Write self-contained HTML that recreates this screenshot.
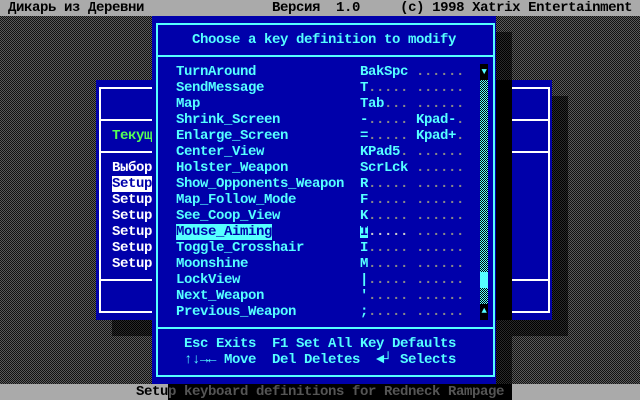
<!DOCTYPE html>
<html><head><meta charset="utf-8"><style>
*{margin:0;padding:0}
body{width:640px;height:400px;overflow:hidden;position:relative;font-family:"Liberation Mono",monospace;font-size:14px;letter-spacing:-0.4px;line-height:16px;font-weight:bold;background:repeating-conic-gradient(#5a5a5a 0 25%,#111 0 50%) 0 0/2px 2px}
div{position:absolute}
.t{white-space:pre;height:16px}
.c{color:#55ffff}.w{color:#fff}.d{color:#888}
.dk{background:repeating-conic-gradient(#2a2a2a 0 25%,#000 0 50%) 0 0/2px 2px}
</style></head><body>
<div class="t" style="left:0;top:0;width:640px;background:#aaa;color:#000"> Дикарь из Деревни                Версия  1.0     (c) 1998 Xatrix Entertainment</div>

<div class="dk" style="left:552px;top:96px;width:16px;height:240px"></div>
<div class="dk" style="left:112px;top:320px;width:456px;height:16px"></div>
<div style="left:96px;top:80px;width:456px;height:240px;background:#0000aa"></div>
<div style="left:99px;top:87px;border:2px solid #fff;box-sizing:border-box;width:451px;height:226px"></div>
<div style="left:99px;top:119px;width:451px;height:2px;background:#fff"></div>
<div style="left:99px;top:151px;width:451px;height:2px;background:#fff"></div>
<div style="left:99px;top:279px;width:451px;height:2px;background:#fff"></div>
<div class="t" style="left:112px;top:128px;color:#55ff55">Текущ</div>
<div class="t w" style="left:112px;top:160px">Выбор</div>
<div class="t" style="left:112px;top:176px;background:#fff;color:#0000aa">Setup</div>
<div class="t w" style="left:112px;top:192px">Setup</div>
<div class="t w" style="left:112px;top:208px">Setup</div>
<div class="t w" style="left:112px;top:224px">Setup</div>
<div class="t w" style="left:112px;top:240px">Setup</div>
<div class="t w" style="left:112px;top:256px">Setup</div>

<div style="left:496px;top:32px;width:16px;height:352px;background:#000"></div>
<div class="dk" style="left:496px;top:32px;width:16px;height:48px"></div>
<div class="dk" style="left:496px;top:320px;width:16px;height:64px"></div>
<div style="left:152px;top:16px;width:344px;height:368px;background:#0000aa"></div>
<div style="left:156px;top:23px;width:339px;height:354px;border:2px solid #55ffff;box-sizing:border-box"></div>
<div style="left:156px;top:55px;width:339px;height:2px;background:#55ffff"></div>
<div style="left:156px;top:327px;width:339px;height:2px;background:#55ffff"></div>
<div class="t c" style="left:192px;top:32px">Choose a key definition to modify</div>

<div class="t c" style="left:176px;top:64px">TurnAround
SendMessage
Map
Shrink_Screen
Enlarge_Screen
Center_View
Holster_Weapon
Show_Opponents_Weapon
Map_Follow_Mode
See_Coop_View
            
Toggle_Crosshair
Moonshine
LockView
Next_Weapon
Previous_Weapon</div>
<div class="t" style="left:176px;top:224px;width:96px;background:#55ffff;color:#0000aa">Mouse_Aiming</div>

<div class="t c" style="left:360px;top:64px">BakSpc
T
Tab
-
=
KPad5
ScrLck
R
F
K

I
M
|
'
;</div>
<div class="t c" style="left:416px;top:112px">Kpad-</div>
<div class="t c" style="left:416px;top:128px">Kpad+</div>
<div class="t d" style="left:360px;top:64px">       ......
 ..... ......
   ... ......
 .....      .
 .....      .
     . ......
       ......
 ..... ......
 ..... ......
 ..... ......
       ......
 ..... ......
 ..... ......
 ..... ......
 ..... ......
 ..... ......</div>
<div class="t" style="left:360px;top:224px;color:#ccc"> .....</div>
<div style="left:360px;top:226px;width:8px;height:12px;background:#55ffff"></div>
<div class="t" style="left:360px;top:224px;color:#0000aa">I</div>

<div style="left:480px;top:64px;width:8px;height:256px;background:repeating-conic-gradient(#55ffff 0 25%,#000 0 50%) 0 0/2px 2px"></div>
<div style="left:480px;top:64px;width:8px;height:16px;background:#000;color:#55ffff;font-size:9px;text-align:center;line-height:16px">▼</div>
<div style="left:480px;top:272px;width:8px;height:16px;background:#55ffff"></div>
<div style="left:480px;top:304px;width:8px;height:16px;background:#000;color:#55ffff;font-size:9px;text-align:center;line-height:14px">▲</div>

<div class="t c" style="left:184px;top:336px">Esc Exits  F1 Set All Key Defaults</div>
<div class="t c" style="left:184px;top:352px">↑↓→← Move  Del Deletes  ◄┘ Selects</div>

<div style="left:0;top:384px;width:640px;height:16px;background:#aaa"></div>
<div style="left:168px;top:384px;width:344px;height:16px;background:#000"></div>
<div class="t" style="left:136px;top:384px;color:#000">Setu</div>
<div class="t" style="left:168px;top:384px;color:#555">p keyboard definitions for Redneck Rampage</div>
</body></html>
